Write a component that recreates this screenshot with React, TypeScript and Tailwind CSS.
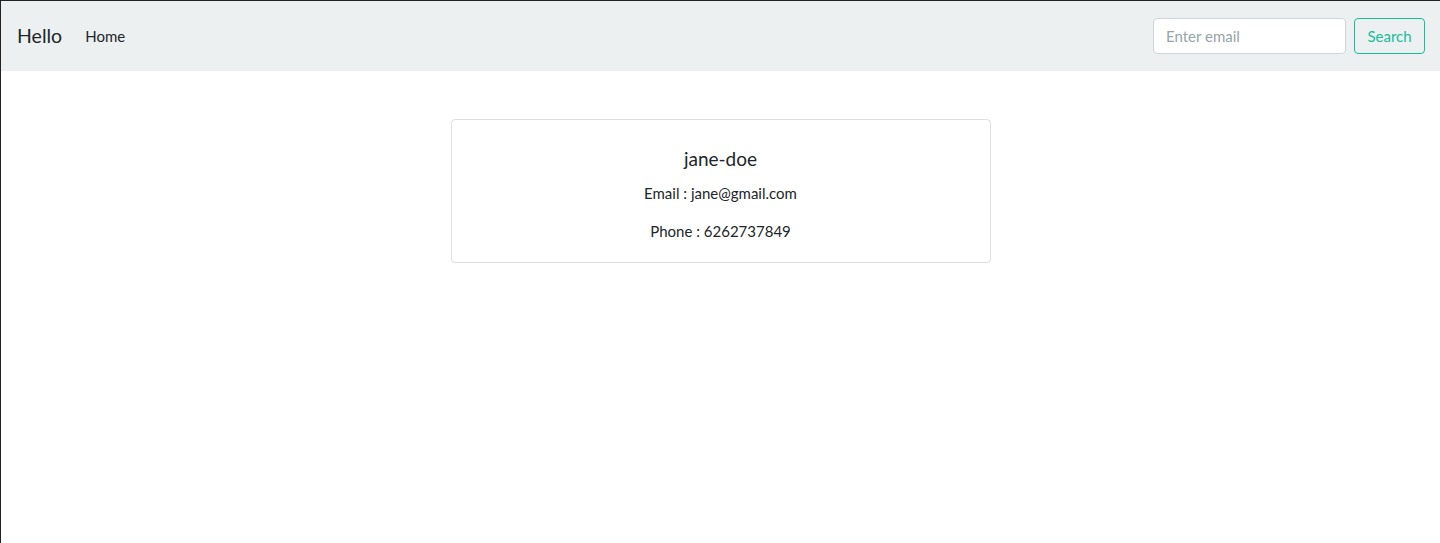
import React from 'react';

export default function App() {
  return (
    <div className="h-[543px] bg-white border-l border-t border-[#222222] text-[#212529]" style={{ fontFamily: 'Lato, "Open Sans", sans-serif' }}>
      {/* Navbar */}
      <nav className="h-[70px] bg-[#ecf0f1] flex items-center pl-[16px] pr-[15px]">
        <a href="#" className="text-[19.5px] leading-[30px] text-[#212529] mr-[23px]">Hello</a>
        <a href="#" className="text-[15px] leading-[22px] text-[#212529]">Home</a>
        <div className="ml-auto flex items-center gap-[8px]">
          <input
            type="text"
            placeholder="Enter email"
            className="w-[193px] h-[36px] px-[12px] text-[15px] bg-white border border-[#ced4da] rounded-[4px] placeholder:text-[#95a5a6] outline-none"
          />
          <button className="h-[36px] w-[71px] text-[15px] text-[#18bc9c] border border-[#18bc9c] rounded-[4px]">Search</button>
        </div>
      </nav>

      {/* Profile card */}
      <div className="mt-[48px] w-[540px] mx-auto border border-[rgba(0,0,0,0.125)] rounded-[4px] pt-[27px] pb-[20px] text-center">
        <h5 className="text-[19px] leading-[23px] mb-[12px]">jane-doe</h5>
        <p className="text-[15px] leading-[22.5px] mb-[15px]">Email : jane@gmail.com</p>
        <p className="text-[15px] leading-[22.5px]">Phone : 6262737849</p>
      </div>
    </div>
  );
}
